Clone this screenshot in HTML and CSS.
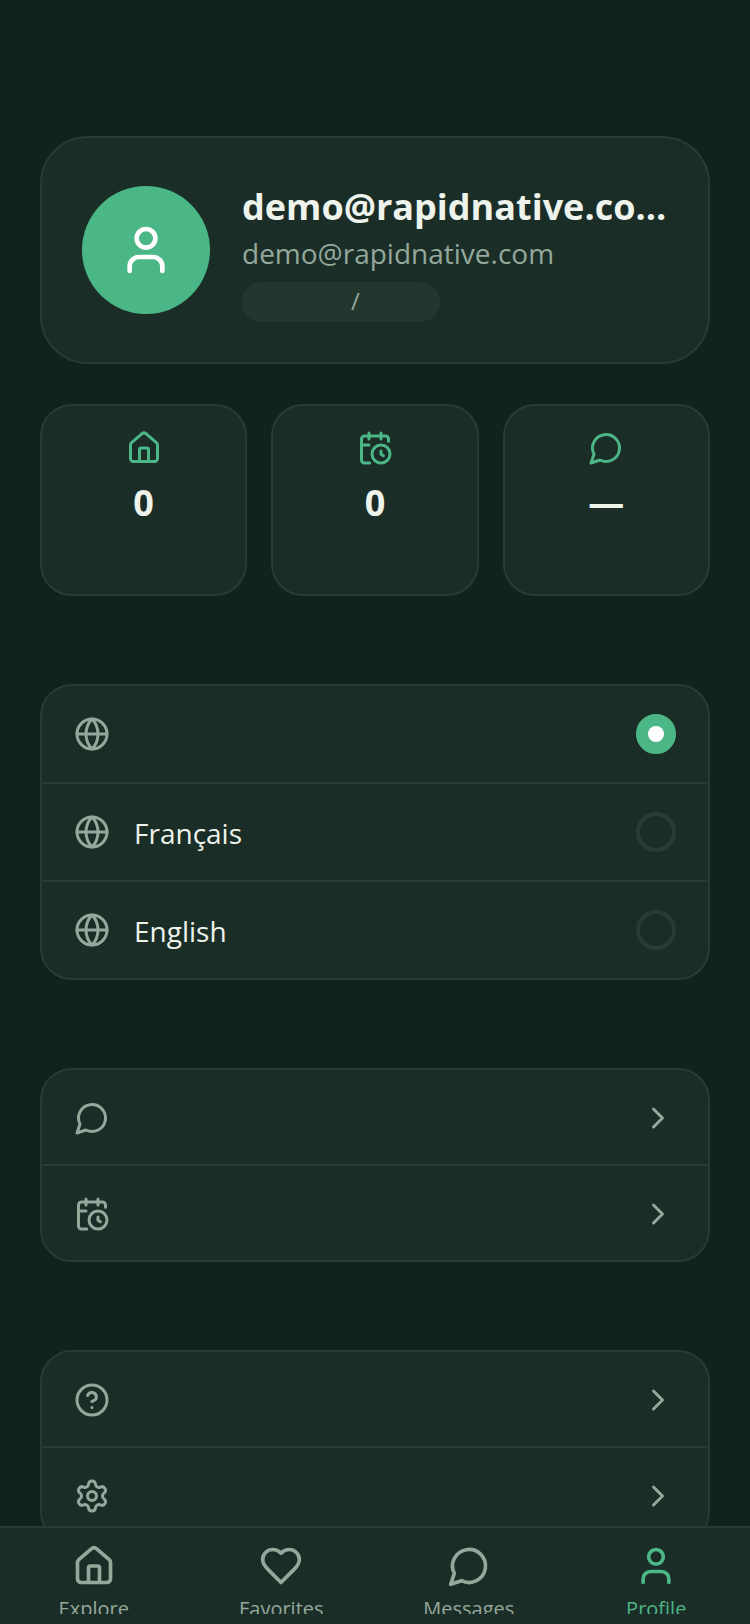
FILE: index.html
```
<!DOCTYPE html>
<html lang="en">
<head>
<meta charset="utf-8">
<meta name="viewport" content="width=device-width, initial-scale=1">
<title>Profile</title>
<link rel="stylesheet" href="styles.css">
</head>
<body>
<svg class="sprite" aria-hidden="true">
  <symbol id="house" viewBox="0 0 24 24"><path d="M15 21v-8a1 1 0 0 0-1-1h-4a1 1 0 0 0-1 1v8"/><path d="M3 10a2 2 0 0 1 .709-1.528l7-5.999a2 2 0 0 1 2.582 0l7 5.999A2 2 0 0 1 21 10v9a2 2 0 0 1-2 2H5a2 2 0 0 1-2-2z"/></symbol>
  <symbol id="calendar" viewBox="0 0 24 24"><path d="M21 7.500V6a2 2 0 0 0-2-2H5a2 2 0 0 0-2 2v14a2 2 0 0 0 2 2h3.500M16 2v4M8 2v4M3 10h5M16 14v2.200l1.600 1"/><circle cx="16" cy="16" r="6"/></symbol>
  <symbol id="message" viewBox="0 0 24 24"><path d="M7.900 20A9 9 0 1 0 4 16.100L2 22Z"/></symbol>
  <symbol id="globe" viewBox="0 0 24 24"><circle cx="12" cy="12" r="10"/><path d="M12 2a14.500 14.500 0 0 0 0 20 14.500 14.500 0 0 0 0-20M2 12h20"/></symbol>
  <symbol id="user" viewBox="0 0 24 24"><path d="M19 21v-2a4 4 0 0 0-4-4H9a4 4 0 0 0-4 4v2"/><circle cx="12" cy="7" r="4"/></symbol>
  <symbol id="heart" viewBox="0 0 24 24"><path d="M19 14c1.490-1.460 3-3.210 3-5.500A5.500 5.500 0 0 0 16.500 3c-1.760 0-3 .5-4.500 2-1.500-1.500-2.740-2-4.500-2A5.500 5.500 0 0 0 2 8.500c0 2.300 1.500 4.050 3 5.500l7 7Z"/></symbol>
  <symbol id="help" viewBox="0 0 24 24"><circle cx="12" cy="12" r="10"/><path d="M9.090 9a3 3 0 0 1 5.830 1c0 2-3 3-3 3M12 17h.01"/></symbol>
  <symbol id="gear" viewBox="0 0 24 24"><path d="M9.671 4.136a2.340 2.340 0 0 1 4.659 0 2.340 2.340 0 0 0 3.319 1.915 2.340 2.340 0 0 1 2.330 4.033 2.340 2.340 0 0 0 0 3.831 2.340 2.340 0 0 1-2.330 4.033 2.340 2.340 0 0 0-3.319 1.915 2.340 2.340 0 0 1-4.659 0 2.340 2.340 0 0 0-3.320-1.915 2.340 2.340 0 0 1-2.330-4.033 2.340 2.340 0 0 0 0-3.831A2.340 2.340 0 0 1 6.350 6.051a2.340 2.340 0 0 0 3.319-1.915"/><circle cx="12" cy="12" r="3"/></symbol>
  <symbol id="chevron" viewBox="0 0 24 24"><path d="m9 18 6-6-6-6"/></symbol>
</svg>
<div class="app">
  <main class="content">
    <section class="card profile">
      <div class="avatar"><svg class="icon icon-lg"><use href="#user"/></svg></div>
      <div class="identity">
        <h1 class="name">demo@rapidnative.com</h1>
        <p class="email">demo@rapidnative.com</p>
        <p class="badge">/</p>
      </div>
    </section>

    <section class="stats">
      <div class="card stat"><svg class="icon"><use href="#house"/></svg><strong class="value">0</strong></div>
      <div class="card stat"><svg class="icon"><use href="#calendar"/></svg><strong class="value">0</strong></div>
      <div class="card stat"><svg class="icon"><use href="#message"/></svg><strong class="value">—</strong></div>
    </section>

    <section class="card list">
      <label class="row"><svg class="icon"><use href="#globe"/></svg><span class="text"></span><input class="radio" type="radio" name="language" aria-label="Default language" checked></label>
      <label class="row"><svg class="icon"><use href="#globe"/></svg><span class="text">Français</span><input class="radio" type="radio" name="language"></label>
      <label class="row"><svg class="icon"><use href="#globe"/></svg><span class="text">English</span><input class="radio" type="radio" name="language"></label>
    </section>

    <section class="card list">
      <button class="row action" type="button" aria-label="Messages"><svg class="icon"><use href="#message"/></svg><span class="text"></span><svg class="icon"><use href="#chevron"/></svg></button>
      <button class="row action" type="button" aria-label="Bookings"><svg class="icon"><use href="#calendar"/></svg><span class="text"></span><svg class="icon"><use href="#chevron"/></svg></button>
    </section>

    <section class="card list">
      <button class="row action" type="button" aria-label="Help"><svg class="icon"><use href="#help"/></svg><span class="text"></span><svg class="icon"><use href="#chevron"/></svg></button>
      <button class="row action" type="button" aria-label="Settings"><svg class="icon"><use href="#gear"/></svg><span class="text"></span><svg class="icon"><use href="#chevron"/></svg></button>
    </section>
  </main>

  <nav class="tabs">
    <a class="tab" href="#explore"><svg class="icon icon-md"><use href="#house"/></svg><span>Explore</span></a>
    <a class="tab" href="#favorites"><svg class="icon icon-md"><use href="#heart"/></svg><span>Favorites</span></a>
    <a class="tab" href="#messages"><svg class="icon icon-md"><use href="#message"/></svg><span>Messages</span></a>
    <a class="tab active" href="#profile" aria-current="page"><svg class="icon icon-md"><use href="#user"/></svg><span>Profile</span></a>
  </nav>
</div>
</body>
</html>
```
FILE: styles.css
```
:root {
  --bg: #12231d;
  --card: #1b2d27;
  --line: #293b34;
  --pill: #24372e;
  --green: #4bb686;
  --text: #eef3ec;
  --muted: #94a89b;
}

* { box-sizing: border-box; }

body {
  margin: 0;
  background: var(--bg);
  color: var(--text);
  font-family: "Open Sans", "Noto Sans", sans-serif;
  font-size: 28px;
  line-height: 38px;
}

h1, p { margin: 0; }

.sprite {
  display: block;
  width: 0;
  height: 0;
}

.app {
  display: flex;
  flex-direction: column;
  height: 100vh;
}

.content {
  flex: 1;
  min-height: 0;
  overflow-y: auto;
  scrollbar-width: none;
  padding: 136px 40px 48px;
}

.card {
  background: var(--card);
  border: 2px solid var(--line);
  border-radius: 32px;
}

.icon {
  flex: none;
  width: 36px;
  height: 36px;
  fill: none;
  stroke: currentColor;
  stroke-width: 2;
  stroke-linecap: round;
  stroke-linejoin: round;
}

.icon-md { width: 44px; height: 44px; }
.icon-lg { width: 56px; height: 56px; }

.profile {
  display: flex;
  align-items: center;
  gap: 32px;
  padding: 40px;
  border-radius: 48px;
}

.avatar {
  display: flex;
  align-items: center;
  justify-content: center;
  flex: none;
  width: 128px;
  height: 128px;
  border-radius: 50%;
  background: var(--green);
  color: #fff;
}

.identity {
  flex: 1;
  min-width: 0;
}

.name {
  overflow: hidden;
  font-size: 36px;
  font-weight: 700;
  line-height: 58px;
  text-overflow: ellipsis;
  white-space: nowrap;
}

.email {
  color: var(--muted);
  line-height: 34px;
}

.badge {
  width: fit-content;
  margin-top: 12px;
  padding: 4px 80px 6px 109px;
  border-radius: 20px;
  background: var(--pill);
  color: var(--muted);
  font-size: 24px;
  line-height: 30px;
}

.stats {
  display: grid;
  grid-template-columns: repeat(3, 1fr);
  gap: 24px;
  margin-top: 40px;
}

.stat {
  display: flex;
  flex-direction: column;
  align-items: center;
  gap: 8px;
  padding: 24px 16px 62px;
  color: var(--green);
}

.value {
  color: var(--text);
  font-size: 36px;
  font-weight: 700;
  line-height: 58px;
}

.list {
  margin-top: 88px;
  overflow: hidden;
}

.row {
  display: flex;
  align-items: center;
  gap: 24px;
  width: 100%;
  padding: 28px 32px;
  border: 0;
  background: none;
  color: var(--muted);
  font: inherit;
  text-align: left;
}

.action { padding: 29px 32px 27px; }

.row + .row { border-top: 2px solid var(--line); }

.text {
  flex: 1;
  min-height: 38px;
  padding-top: 2px;
  color: var(--text);
}

.radio {
  display: flex;
  align-items: center;
  justify-content: center;
  flex: none;
  width: 40px;
  height: 40px;
  margin: 0;
  appearance: none;
  border: 4px solid var(--line);
  border-radius: 50%;
}

.radio:checked {
  border-color: var(--green);
  background: var(--green);
}

.radio:checked::before {
  content: "";
  width: 16px;
  height: 16px;
  border-radius: 50%;
  background: #fff;
}

.tabs {
  display: grid;
  grid-template-columns: repeat(4, 1fr);
  flex: none;
  height: 98px;
  padding: 16px 0 10px;
  border-top: 2px solid var(--line);
  background: var(--card);
}

.tab {
  display: flex;
  flex-direction: column;
  align-items: center;
  gap: 6px;
  min-height: 0;
  overflow: hidden;
  color: var(--muted);
  font-size: 20px;
  line-height: 30px;
  text-decoration: none;
}

.tab.active { color: var(--green); }
```
